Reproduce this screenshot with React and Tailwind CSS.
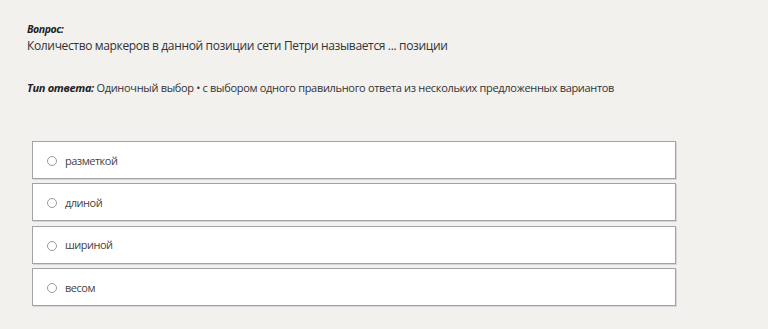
export default function App() {
    const options = ["разметкой", "длиной", "шириной", "весом"];

    return (
        <div className="min-h-[329px] w-full bg-[#f2f1ee] text-[#333] font-['Open_Sans',sans-serif]">
            <div className="pl-[27px] pt-[21px]">
                <div className="text-[10.5px] font-bold italic tracking-[-0.45px] text-[#222] leading-[16px]">Вопрос:</div>
                <div className="text-[12px] tracking-[-0.35px] leading-[18px]">
                    Количество маркеров в данной позиции сети Петри называется ... позиции
                </div>

                <div className="mt-[24px] text-[11px] tracking-[-0.32px] leading-[18px]">
                    <span className="font-bold italic text-[#222]">Тип ответа:</span> Одиночный выбор • с выбором одного правильного ответа из нескольких предложенных вариантов
                </div>
            </div>

            <div className="flex flex-col gap-[4.3px] ml-[32px] mt-[44px] w-[644px]">
                {options.map(opt => (
                    <div key={opt} className="flex items-center h-[38px] bg-white border border-[#a3a3a3] shadow-[1px_1px_0_#d6d6d6] pl-[14px] pt-[2px]">
                        <span className="w-[10px] h-[10px] rounded-full border border-[#999] bg-white"></span>
                        <span className="ml-[8px] text-[11px] tracking-[-0.5px] text-[#444]">{opt}</span>
                    </div>
                ))}
            </div>
        </div>
    )
}
